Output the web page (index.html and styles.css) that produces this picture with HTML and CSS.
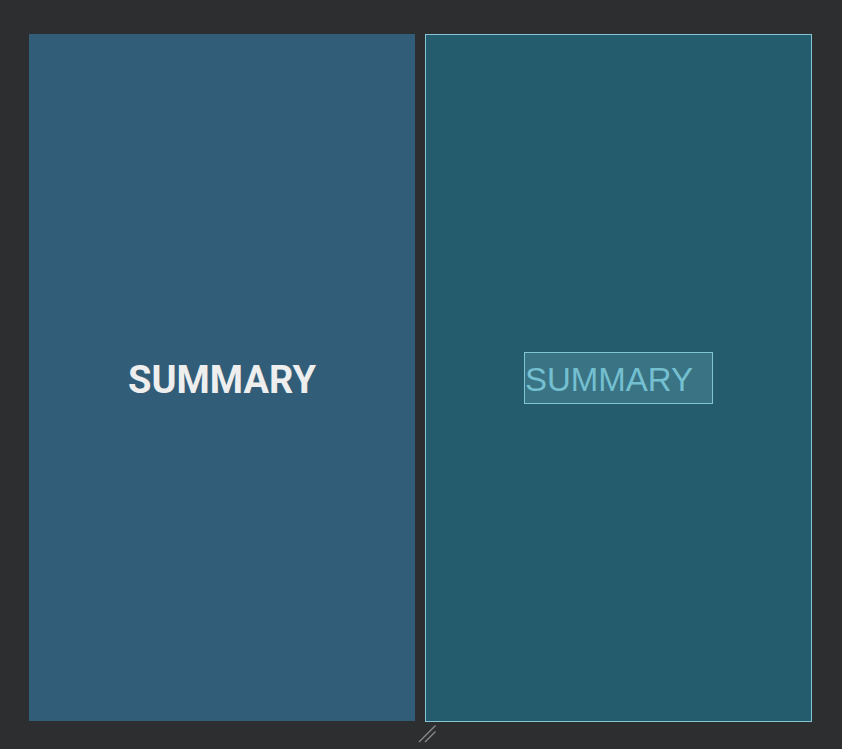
FILE: index.html
```html
<!DOCTYPE html>
<html>
<head>
<meta charset="utf-8">
<link rel="stylesheet" href="styles.css">
</head>
<body>
<div class="stage">
  <div class="panel design">
    <span class="title">SUMMARY</span>
  </div>
  <div class="panel blueprint">
    <div class="view-box"><span class="bp-title">SUMMARY</span></div>
  </div>
  <svg class="resize" width="24" height="24" viewBox="0 0 24 24">
    <line x1="2" y1="22" x2="18.5" y2="5.5" stroke="#8c8c8c" stroke-width="1.2"/>
    <line x1="8" y1="22" x2="18.5" y2="11.5" stroke="#8c8c8c" stroke-width="1.2"/>
  </svg>
</div>
</body>
</html>
```

FILE: styles.css
```css
html, body {
  margin: 0;
  padding: 0;
  background: #2d2e30;
  width: 842px;
  height: 749px;
  overflow: hidden;
}
.stage {
  position: relative;
  display: flex;
  gap: 10px;
  padding: 34px 0 0 29px;
  align-items: flex-start;
}
.panel {
  display: flex;
  align-items: center;
  justify-content: center;
  box-sizing: border-box;
}
.design {
  width: 386px;
  height: 687px;
  background: #325d78;
}
.title {
  font-family: Roboto, "Liberation Sans", sans-serif;
  font-weight: 700;
  font-size: 38px;
  color: #eeeeee;
  line-height: 1;
  margin-top: 4px;
}
.blueprint {
  width: 387px;
  height: 688px;
  background: #245c6e;
  border: 1px solid #86c6d4;
}
.view-box {
  box-sizing: border-box;
  width: 189px;
  height: 52px;
  background: #3a7484;
  border: 1px solid #7fc5d6;
  display: flex;
  align-items: center;
}
.bp-title {
  font-family: "Liberation Sans", Arial, sans-serif;
  font-size: 33px;
  color: #74bfd0;
  line-height: 1;
  margin-top: 2px;
}
.resize {
  position: absolute;
  left: 417px;
  top: 720px;
}
```
